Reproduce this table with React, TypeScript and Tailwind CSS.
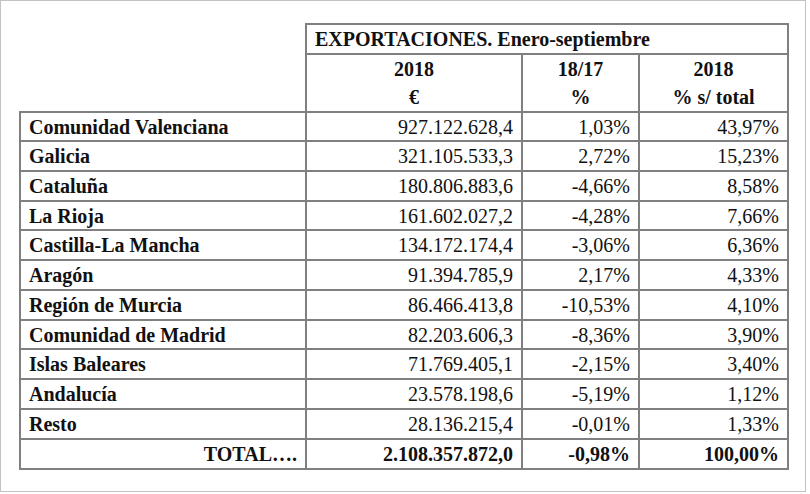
const rows = [
  { name: "Comunidad Valenciana", value: "927.122.628,4", change: "1,03%", share: "43,97%", h: "h-[29px]" },
  { name: "Galicia", value: "321.105.533,3", change: "2,72%", share: "15,23%", h: "h-[30px]" },
  { name: "Cataluña", value: "180.806.883,6", change: "-4,66%", share: "8,58%", h: "h-[30px]" },
  { name: "La Rioja", value: "161.602.027,2", change: "-4,28%", share: "7,66%", h: "h-[29px]" },
  { name: "Castilla-La Mancha", value: "134.172.174,4", change: "-3,06%", share: "6,36%", h: "h-[30px]" },
  { name: "Aragón", value: "91.394.785,9", change: "2,17%", share: "4,33%", h: "h-[30px]" },
  { name: "Región de Murcia", value: "86.466.413,8", change: "-10,53%", share: "4,10%", h: "h-[30px]" },
  { name: "Comunidad de Madrid", value: "82.203.606,3", change: "-8,36%", share: "3,90%", h: "h-[29px]" },
  { name: "Islas Baleares", value: "71.769.405,1", change: "-2,15%", share: "3,40%", h: "h-[30px]" },
  { name: "Andalucía", value: "23.578.198,6", change: "-5,19%", share: "1,12%", h: "h-[30px]" },
  { name: "Resto", value: "28.136.215,4", change: "-0,01%", share: "1,33%", h: "h-[30px]" },
]

const cell = "border-2 border-[#808080] px-2 py-0 align-middle"

export default function App() {
  return (
    <div className="w-[810px] h-[494px] bg-white">
      <div className="w-[806px] h-[492px] border border-[#c2c2c2] pl-[18px] pt-[22px] font-['Liberation_Serif',serif] text-[20px] leading-none text-[#111]">
        <table className="border-collapse w-[768px] table-fixed">
          <colgroup>
            <col className="w-[286px]" />
            <col className="w-[216px]" />
            <col className="w-[117px]" />
            <col className="w-[149px]" />
          </colgroup>
          <thead>
            <tr className="h-[30px]">
              <th rowSpan={2} className="border-0 p-0" />
              <th colSpan={3} className={`${cell} text-left font-bold`}>
                EXPORTACIONES. Enero-septiembre
              </th>
            </tr>
            <tr className="h-[58px]">
              <th className={`${cell} text-center font-bold leading-[28px]`}>
                2018
                <br />€
              </th>
              <th className={`${cell} text-center font-bold leading-[28px]`}>
                18/17
                <br />%
              </th>
              <th className={`${cell} text-center font-bold leading-[28px]`}>
                2018
                <br />% s/ total
              </th>
            </tr>
          </thead>
          <tbody>
            {rows.map((r) => (
              <tr key={r.name} className={r.h}>
                <td className={`${cell} font-bold text-left`}>{r.name}</td>
                <td className={`${cell} text-right`}>{r.value}</td>
                <td className={`${cell} text-right`}>{r.change}</td>
                <td className={`${cell} text-right`}>{r.share}</td>
              </tr>
            ))}
            <tr className="h-[30px]">
              <td className={`${cell} font-bold text-right`}>TOTAL….</td>
              <td className={`${cell} font-bold text-right`}>2.108.357.872,0</td>
              <td className={`${cell} font-bold text-right`}>-0,98%</td>
              <td className={`${cell} font-bold text-right`}>100,00%</td>
            </tr>
          </tbody>
        </table>
      </div>
    </div>
  )
}
